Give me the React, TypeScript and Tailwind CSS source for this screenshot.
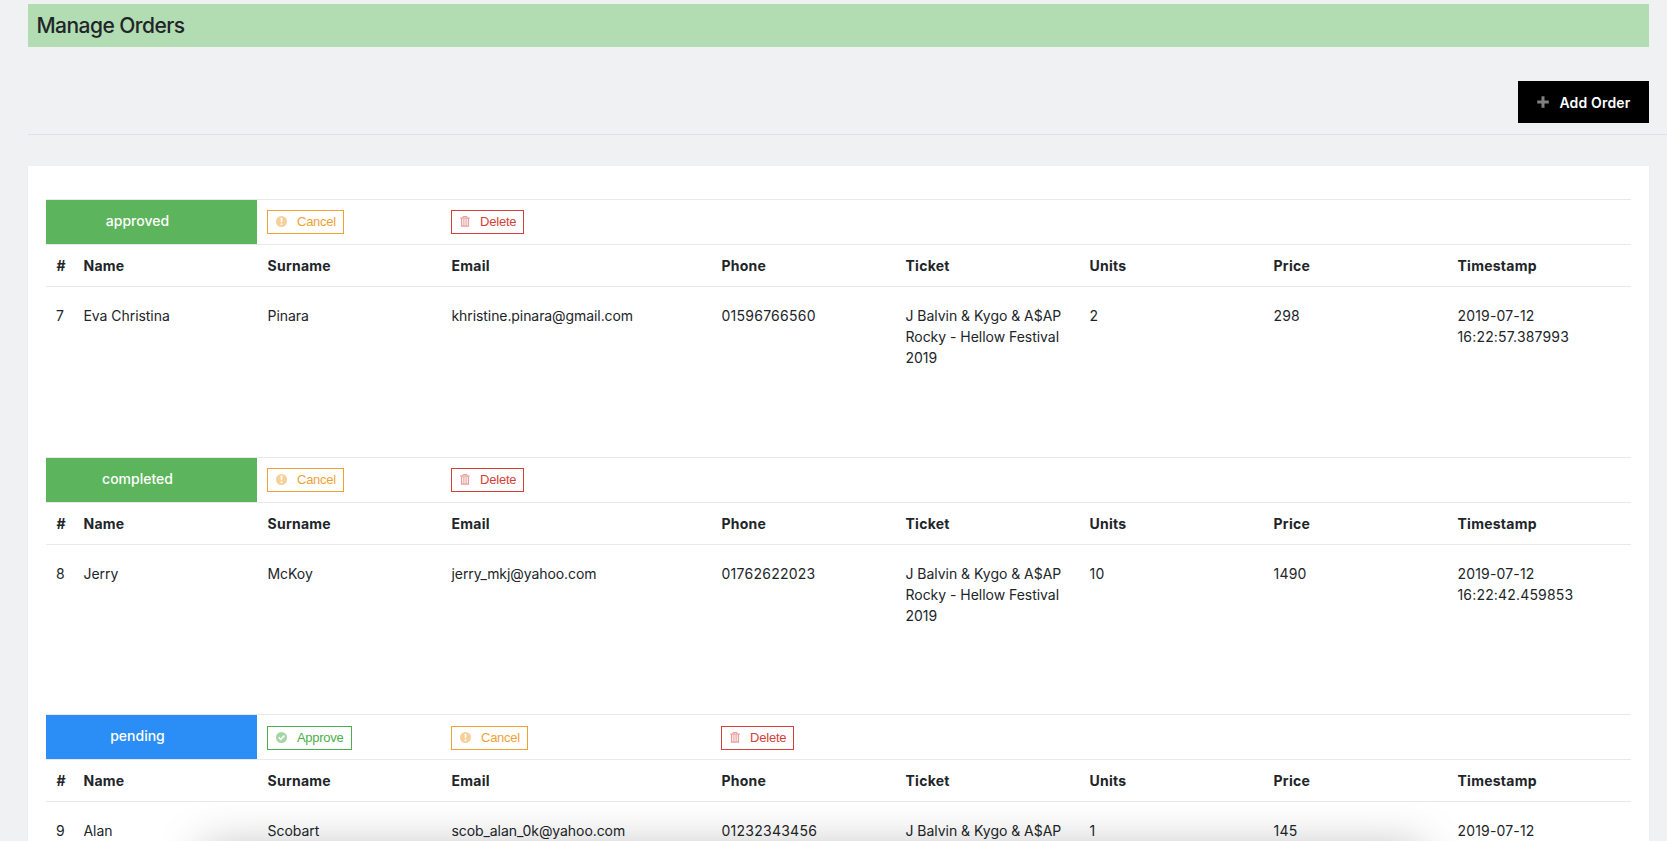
import React from "react";

const ticketName = "J Balvin & Kygo & A$AP Rocky - Hellow Festival 2019";

const orders = [
  {
    id: 7,
    status: "approved",
    name: "Eva Christina",
    surname: "Pinara",
    email: "khristine.pinara@gmail.com",
    phone: "01596766560",
    units: 2,
    price: 298,
    timestamp: "2019-07-12 16:22:57.387993",
  },
  {
    id: 8,
    status: "completed",
    name: "Jerry",
    surname: "McKoy",
    email: "jerry_mkj@yahoo.com",
    phone: "01762622023",
    units: 10,
    price: 1490,
    timestamp: "2019-07-12 16:22:42.459853",
  },
  {
    id: 9,
    status: "pending",
    name: "Alan",
    surname: "Scobart",
    email: "scob_alan_0k@yahoo.com",
    phone: "01232343456",
    units: 1,
    price: 145,
    timestamp: "2019-07-12 16:20:11.120394",
  },
];

const headers = ["#", "Name", "Surname", "Email", "Phone", "Ticket", "Units", "Price", "Timestamp"];

const columns = "grid grid-cols-[27px_184px_184px_270px_184px_184px_184px_184px_184px]";

function PlusIcon() {
  return (
    <svg width="12" height="12" viewBox="0 0 12 12" stroke="currentColor" strokeWidth="3" className="opacity-50">
      <path d="M6 0.2V11.8M0.2 6H11.8" />
    </svg>
  );
}

function CheckIcon() {
  return (
    <svg width="11" height="11" viewBox="0 0 11 11" className="mb-px opacity-50">
      <circle cx="5.5" cy="5.5" r="5.5" fill="currentColor" />
      <path d="M2.7 5.3L4.8 7.3L8.4 3.7" fill="none" stroke="white" strokeWidth="1.7" />
    </svg>
  );
}

function ExclamationIcon() {
  return (
    <svg width="11" height="11" viewBox="0 0 11 11" className="mb-px opacity-50">
      <circle cx="5.5" cy="5.5" r="5.5" fill="currentColor" />
      <path d="M4.5 1.8H6.5L6.2 6.3H4.8ZM4.6 7.4H6.4V9.1H4.6Z" fill="white" />
    </svg>
  );
}

function TrashIcon() {
  return (
    <svg width="10" height="11" viewBox="0 0 10 11" fill="none" stroke="currentColor" className="mb-px opacity-50">
      <path d="M0.3 2.1H9.7" strokeWidth="1.3" />
      <path d="M3.1 1.8V0.5H6.9V1.8" />
      <path d="M1.6 2.5V10.2H8.4V2.5" strokeWidth="1.3" />
      <path d="M3.9 3V10M6.1 3V10" strokeWidth="1.1" />
    </svg>
  );
}

function ApproveButton() {
  return (
    <button className="flex h-6 w-[85px] items-center border border-[#4cae4c] pl-[7.5px] font-['Liberation_Sans',sans-serif] text-[13px] leading-5 text-[#4cae4c]">
      <CheckIcon />
      <span className="ml-[10.5px] tracking-[-0.3px]">Approve</span>
    </button>
  );
}

function CancelButton() {
  return (
    <button className="flex h-6 w-[77px] items-center border border-[#eea236] pl-[7.5px] font-['Liberation_Sans',sans-serif] text-[13px] leading-5 text-[#eea236]">
      <ExclamationIcon />
      <span className="ml-[10.5px] tracking-[-0.25px]">Cancel</span>
    </button>
  );
}

function DeleteButton() {
  return (
    <button className="flex h-6 w-[73px] items-center border border-[#d43f3a] pl-[7.5px] font-['Liberation_Sans',sans-serif] text-[13px] leading-5 text-[#d43f3a]">
      <TrashIcon />
      <span className="ml-[10.5px] tracking-[-0.2px]">Delete</span>
    </button>
  );
}

function Order({ order }: { order: (typeof orders)[number] }) {
  const pending = order.status === "pending";
  const cell = pending ? "px-[10px] pt-[11px]" : "px-[10px] pt-[10px]";

  return (
    <div>
      <div className={`${columns} h-[45px] border-t border-[#e9e9e9]`}>
        <div
          className={`col-span-2 flex items-center justify-center pr-[28px] pb-[3px] text-white font-medium ${
            pending ? "bg-[#2b8ef6]" : "bg-[#5cb55c]"
          }`}
        >
          {order.status}
        </div>
        <div className={cell}>{pending ? <ApproveButton /> : <CancelButton />}</div>
        <div className={cell}>{pending ? <CancelButton /> : <DeleteButton />}</div>
        <div className={cell}>{pending && <DeleteButton />}</div>
      </div>
      <div className={`${columns} h-[43px] border-y border-[#e9e9e9] pt-[10px] font-bold tracking-[0.25px]`}>
        {headers.map((header) => (
          <div key={header} className="pl-[10.5px]">
            {header}
          </div>
        ))}
      </div>
      <div className={`${columns} pt-[18px]`}>
        <div className="pl-[10px]">{order.id}</div>
        <div className="pl-[10.5px] tracking-[-0.05px]">{order.name}</div>
        <div className="pl-[10.5px] tracking-[-0.05px]">{order.surname}</div>
        <div className="pl-[10.5px] tracking-[-0.08px]">{order.email}</div>
        <div className="pl-[10.5px] tracking-[0.25px]">{order.phone}</div>
        <div className="pr-[10px] pl-[10.5px] tracking-[-0.03px]">{ticketName}</div>
        <div className="pl-[10.5px] tracking-[0.2px]">{order.units}</div>
        <div className="pl-[10.5px] tracking-[0.2px]">{order.price}</div>
        <div className="pr-[10px] pl-[10.5px] tracking-[0.17px]">{order.timestamp}</div>
      </div>
    </div>
  );
}

function App() {
  return (
    <div className="relative h-[841px] overflow-hidden bg-[#f0f1f3] pt-1 pl-7 font-['Inter',sans-serif] text-[14px] leading-[21px] text-[#212529]">
      <div className="mr-[18px] flex h-[43px] items-center bg-[#b2dcb2] px-[8.5px]">
        <h1 className="text-[21px] font-medium tracking-[-0.55px]">Manage Orders</h1>
      </div>
      <div className="flex h-[88px] justify-end border-b border-[#dee2e6] pt-[34px] pr-[18px]">
        <button className="flex h-[42px] w-[131px] items-center bg-black pl-[19px] font-semibold text-white">
          <PlusIcon />
          <span className="ml-[10.5px] tracking-[0.15px]">Add Order</span>
        </button>
      </div>
      <div className="mt-[31px] mr-[18px] grid grid-rows-[258px_257px_258px] bg-white px-[18px] pt-[33px] shadow-[0_1px_1px_rgba(0,0,0,0.1)]">
        {orders.map((order) => (
          <Order key={order.id} order={order} />
        ))}
      </div>
      <div className="pointer-events-none absolute top-[846px] left-[202px] h-[60px] w-[1221px] shadow-[0_0_45px_rgba(0,0,0,0.25)]" />
    </div>
  );
}

export default App;
